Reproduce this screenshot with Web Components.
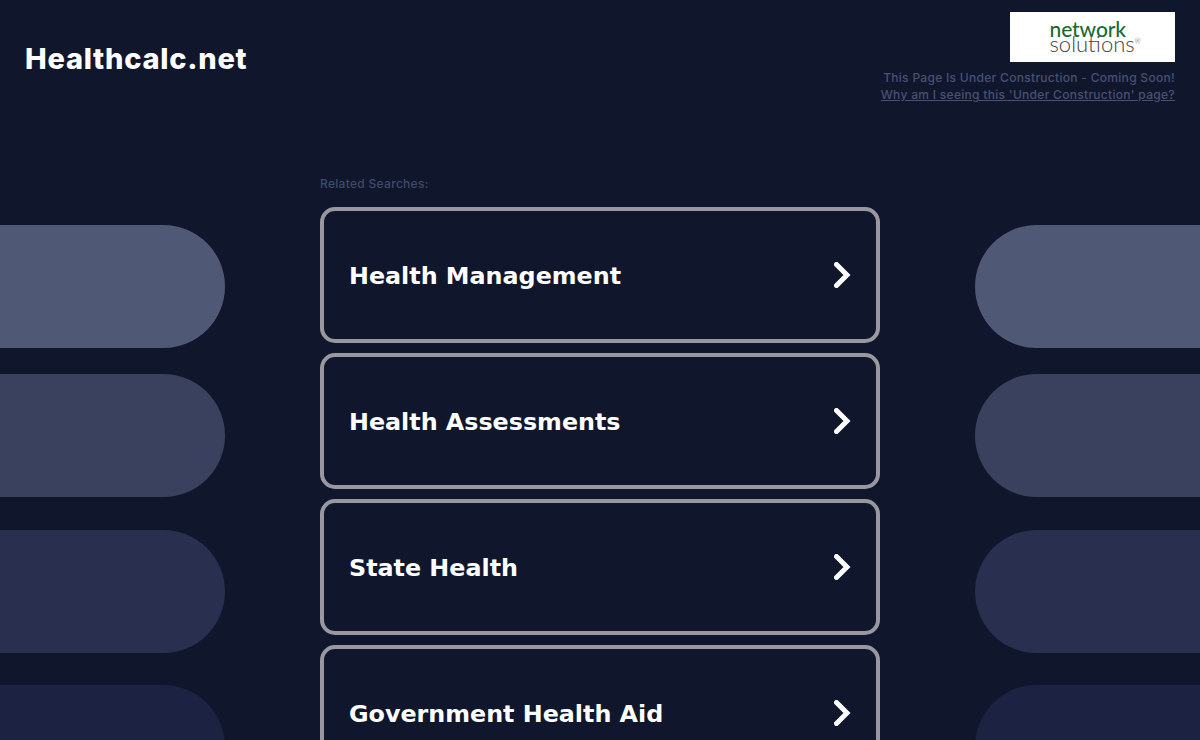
<!DOCTYPE html>
<html>
<head>
<meta charset="utf-8">
<title>Healthcalc.net</title>
<style>
    html, body { margin: 0; height: 740px; overflow: hidden; background: #10172c; }
</style>
</head>
<body>
<parked-page></parked-page>
<script>
class BgPills extends HTMLElement {
    constructor() {
        super();
        this.attachShadow({ mode: "open" });
    }

    connectedCallback() {
        this.shadowRoot.innerHTML = `
        <style>
            :host { position: absolute; top: 0; bottom: 0; width: 225px; display: block; }
            :host([side="left"]) { left: 0; }
            :host([side="right"]) { right: 0; }
            div { position: absolute; left: 0; right: 0; height: 123px; }
            :host([side="left"]) div { border-radius: 0 62px 62px 0; }
            :host([side="right"]) div { border-radius: 62px 0 0 62px; }
            .a { top: 225px; background: #4f5874; }
            .b { top: 374px; background: #3a415f; }
            .c { top: 529.5px; background: #282f4f; }
            .d { top: 685px; background: #1c2342; }
        </style>
        <div class="a"></div><div class="b"></div><div class="c"></div><div class="d"></div>`;
    }
}

class NsLogo extends HTMLElement {
    constructor() {
        super();
        this.attachShadow({ mode: "open" });
    }

    connectedCallback() {
        this.shadowRoot.innerHTML = `
        <style>
            :host {
                display: flex;
                flex-direction: column;
                justify-content: center;
                width: 165px;
                height: 50px;
                box-sizing: border-box;
                padding: 0 0 2px 39.5px;
                background: #fff;
                font-family: "Lato", sans-serif;
                line-height: 15px;
                text-align: left;
            }
            .top { color: #1c6b2e; font-size: 21px; letter-spacing: -0.1px; }
            .bottom { color: #444; font-size: 22px; font-weight: 300; letter-spacing: 0; }
            sup { font-size: 7px; vertical-align: 8px; line-height: 0; }
        </style>
        <span class="top">network</span>
        <span class="bottom">solutions<sup>®</sup></span>`;
    }
}

class TopBar extends HTMLElement {
    constructor() {
        super();
        this.attachShadow({ mode: "open" });
    }

    connectedCallback() {
        this.shadowRoot.innerHTML = `
        <style>
            :host {
                display: flex;
                justify-content: space-between;
                align-items: flex-start;
                padding: 12px 25px 0;
                height: 154px;
                box-sizing: border-box;
            }
            h1 {
                margin: 28px 0 0;
                font: 800 29px/38px "Inter", sans-serif;
                letter-spacing: 0.75px;
                color: #fff;
            }
            .right {
                display: flex;
                flex-direction: column;
                align-items: flex-end;
                font: 500 12px/17px "Inter", sans-serif;
                letter-spacing: 0.3px;
                color: #4a5072;
            }
            p { margin: 7px 0 0; }
            a { color: inherit; }
        </style>
        <h1>Healthcalc.net</h1>
        <div class="right">
            <ns-logo></ns-logo>
            <p>This Page Is Under Construction - Coming Soon!</p>
            <a href="#">Why am I seeing this 'Under Construction' page?</a>
        </div>`;
    }
}

class SearchLink extends HTMLElement {
    constructor() {
        super();
        this.attachShadow({ mode: "open" });
    }

    connectedCallback() {
        this.shadowRoot.innerHTML = `
        <style>
            :host {
                display: flex;
                align-items: center;
                justify-content: space-between;
                height: 136px;
                box-sizing: border-box;
                padding: 1px 25.5px 0 25px;
                border: 4px solid #98989e;
                border-radius: 15px;
                font: 700 23.8px "DejaVu Sans", sans-serif;
                color: #fff;
                flex: none;
            }
            svg { display: block; margin-top: -1px; }
        </style>
        <slot></slot>
        <svg width="17" height="26" viewBox="0 0 17 26" fill="none" stroke="#fff" stroke-width="5" stroke-linecap="round" stroke-linejoin="miter">
            <path d="M2.5 2.5 L13 13 L2.5 23.5"/>
        </svg>`;
    }
}

class SearchList extends HTMLElement {
    constructor() {
        super();
        this.attachShadow({ mode: "open" });
    }

    connectedCallback() {
        this.shadowRoot.innerHTML = `
        <style>
            :host {
                display: flex;
                flex-direction: column;
                gap: 10px;
                width: 560px;
                margin: 0 auto;
                position: relative;
            }
            .label {
                font: 500 12px/16px "Inter", sans-serif;
                letter-spacing: 0.3px;
                color: #414969;
                margin: 22px 0 5px;
            }
        </style>
        <div class="label">Related Searches:</div>
        <slot></slot>`;
    }
}

class ParkedPage extends HTMLElement {
    constructor() {
        super();
        this.attachShadow({ mode: "open" });
    }

    connectedCallback() {
        this.shadowRoot.innerHTML = `
        <style>
            :host { display: block; position: relative; height: 740px; overflow: hidden; }
            top-bar, search-list { position: relative; }
        </style>
        <bg-pills side="left"></bg-pills>
        <bg-pills side="right"></bg-pills>
        <top-bar></top-bar>
        <search-list>
            <search-link>Health Management</search-link>
            <search-link>Health Assessments</search-link>
            <search-link>State Health</search-link>
            <search-link>Government Health Aid</search-link>
        </search-list>`;
    }
}

customElements.define("bg-pills", BgPills);
customElements.define("ns-logo", NsLogo);
customElements.define("top-bar", TopBar);
customElements.define("search-link", SearchLink);
customElements.define("search-list", SearchList);
customElements.define("parked-page", ParkedPage);
</script>
</body>
</html>
